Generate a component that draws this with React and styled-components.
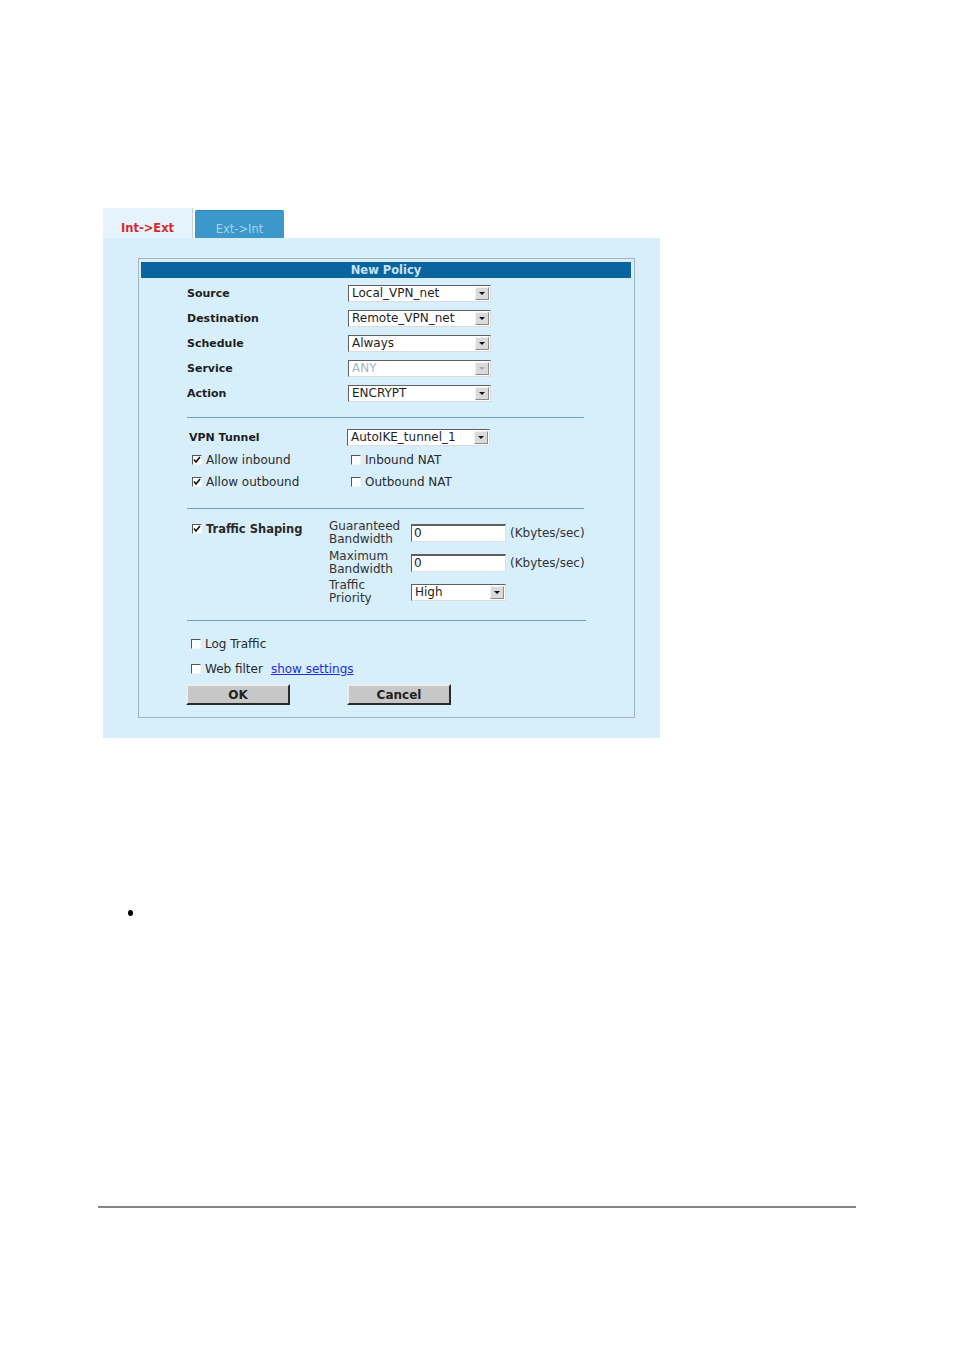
import React from 'react';
import styled, { createGlobalStyle } from 'styled-components';

const Global = createGlobalStyle`
  html, body { margin: 0; padding: 0; background: #fff; }
  body { font-family: "DejaVu Sans", Verdana, sans-serif; }
`

const Page = styled.div`
  width: 954px;
  height: 1351px;
  padding-top: 208px;
  box-sizing: border-box;
`

const Tabs = styled.div`
  margin-left: 103px;
  width: 557px;
`

const TabRow = styled.div`
  display: flex;
  align-items: flex-end;
  height: 30px;
`

const Tab = styled.div`
  box-sizing: border-box;
  display: flex;
  align-items: center;
  justify-content: center;
  font-size: 11.5px;
  ${p => p.$active ? `
    width: 90px;
    height: 30px;
    padding-top: 10px;
    background: #e4f3fc;
    color: #d42a2a;
    font-weight: bold;
    border-right: 1px solid #c3d4de;
  ` : `
    width: 89px;
    height: 28px;
    padding-top: 8px;
    margin-left: 2px;
    background: #3c97cb;
    color: #a6d3ef;
    border-top: 1px solid #2f84b6;
    border-radius: 2px 2px 0 0;
  `}
`

const Panel = styled.div`
  background: #d7eefb;
  height: 500px;
  box-sizing: border-box;
  padding: 20px 25px 20px 35px;
`

const Box = styled.div`
  border: 1px solid #a6b4bd;
  height: 460px;
  box-sizing: border-box;
  padding: 3px 3px 0 2px;
`

const Header = styled.div`
  height: 16px;
  background: #0a64a0;
  color: #c9e3f5;
  font-size: 11.5px;
  font-weight: bold;
  line-height: 16px;
  text-align: center;
`

const Body = styled.div`
  padding: 3px 0 0 46px;
  font-size: 12px;
  color: #222;
`

const Row = styled.div`
  display: flex;
  align-items: center;
  height: ${p => p.$h || 25}px;
  padding-left: ${p => p.$indent || 0}px;
`

const Label = styled.div`
  width: ${p => p.$w || 161}px;
  flex: none;
  font-size: 11px;
  font-weight: bold;
  color: #1e1e1e;
`

const Rule = styled.div`
  width: ${p => p.$w || 397}px;
  height: 1px;
  background: #6fa0bf;
  margin: ${p => p.$m || '11px 0 8px'};
`

const SelectBox = styled.div`
  display: flex;
  width: ${p => p.$w || 143}px;
  height: 17px;
  box-sizing: border-box;
  border: 1px solid;
  border-color: #5f5f5f #dcdcdc #dcdcdc #5f5f5f;
  background: #fff;
  font-size: 12px;
  color: ${p => p.$disabled ? '#aab6be' : '#1e1e1e'};
`

const SelectText = styled.div`
  flex: 1;
  padding-left: 3px;
  line-height: 15px;
  white-space: nowrap;
  overflow: hidden;
`

const Arrow = styled.div`
  width: 14px;
  flex: none;
  box-sizing: border-box;
  margin: 1px;
  background: #dadada;
  border: 1px solid;
  border-color: #f2f2f2 #8a8a8a #8a8a8a #f2f2f2;
  display: flex;
  align-items: center;
  justify-content: center;
  &::after {
    content: "";
    border-left: 3px solid transparent;
    border-right: 3px solid transparent;
    border-top: 3px solid ${p => p.$disabled ? '#a9a9a9' : '#111'};
  }
`

const Input = styled.div`
  width: 95px;
  height: 18px;
  box-sizing: border-box;
  border: 1px solid;
  border-color: #5f5f5f #e0e0e0 #e0e0e0 #5f5f5f;
  border-top-width: 2px;
  background: #fff;
  font-size: 12px;
  line-height: 15px;
  padding-left: 2px;
  flex: none;
`

const Check = styled.span`
  display: inline-flex;
  align-items: center;
  justify-content: center;
  width: 10px;
  height: 10px;
  box-sizing: border-box;
  border: 1px solid;
  border-color: #555 #f4f4f4 #f4f4f4 #555;
  background: #fff;
  margin-right: 4px;
  flex: none;
`

const Option = styled.label`
  display: flex;
  align-items: center;
  width: ${p => p.$w || 'auto'};
  font-size: ${p => p.$bold ? '11.5px' : '12px'};
  font-weight: ${p => p.$bold ? 'bold' : 'normal'};
  color: #2a2a2a;
`

const ShapingGrid = styled.div`
  display: grid;
  grid-template-columns: 137px 82px 97px auto;
  grid-auto-rows: 26px;
  row-gap: 3.5px;
  align-items: center;
  margin-left: 5px;
`

const ShapeHead = styled.div`
  grid-row: 1 / span 3;
  align-self: start;
  padding-top: 2px;
`

const SmallLabel = styled.div`
  font-size: 12px;
  line-height: 13px;
  color: #333;
`

const Unit = styled.div`
  font-size: 12px;
  color: #333;
  padding-left: 2px;
`

const Link = styled.a`
  color: #1f2ce0;
  text-decoration: underline;
  margin-left: 8px;
`

const Buttons = styled.div`
  display: flex;
  margin: 3px 0 0 -1px;
  gap: 57px;
`

const Button = styled.div`
  width: 104px;
  height: 21px;
  box-sizing: border-box;
  background: #c7c7c7;
  border: 2px solid;
  border-color: #ececec #2a2a2a #2a2a2a #ececec;
  font-size: 12px;
  font-weight: bold;
  color: #222;
  display: flex;
  align-items: center;
  justify-content: center;
`

const Bullet = styled.div`
  width: 5px;
  height: 6px;
  border-radius: 50%;
  background: #000;
  margin: 172px 0 0 128px;
`

const Footer = styled.div`
  width: 758px;
  height: 2px;
  background: #858585;
  margin: 290px 0 0 98px;
`

function Tick({ on }) {
  return (
    <Check>
      {on && (
        <svg width="8" height="8" viewBox="0 0 8 8">
          <path d="M1 3.5 L3 6 L7 1" fill="none" stroke="#111" strokeWidth="1.6" />
        </svg>
      )}
    </Check>
  )
}

function Select({ value, w, disabled }) {
  return (
    <SelectBox $w={w} $disabled={disabled}>
      <SelectText>{value}</SelectText>
      <Arrow $disabled={disabled} />
    </SelectBox>
  )
}

const fields = [
  ['Source', 'Local_VPN_net'],
  ['Destination', 'Remote_VPN_net'],
  ['Schedule', 'Always'],
  ['Service', 'ANY', true],
  ['Action', 'ENCRYPT'],
]

export default function App() {
  return (
    <Page>
      <Global />
      <Tabs>
        <TabRow>
          <Tab $active>Int-&gt;Ext</Tab>
          <Tab>Ext-&gt;Int</Tab>
        </TabRow>
        <Panel>
          <Box>
            <Header>New Policy</Header>
            <Body>
              {fields.map(([label, value, disabled]) => (
                <Row key={label}>
                  <Label>{label}</Label>
                  <Select value={value} disabled={disabled} />
                </Row>
              ))}
              <Rule />
              <Row $h={23} $indent={2}>
                <Label $w={158}>VPN Tunnel</Label>
                <Select value="AutoIKE_tunnel_1" />
              </Row>
              <Row $h={22} $indent={5}>
                <Option $w="159px"><Tick on />Allow inbound</Option>
                <Option><Tick />Inbound NAT</Option>
              </Row>
              <Row $h={22} $indent={5}>
                <Option $w="159px"><Tick on />Allow outbound</Option>
                <Option><Tick />Outbound NAT</Option>
              </Row>
              <Rule $m="15px 0 11px" />
              <ShapingGrid>
                <ShapeHead>
                  <Option $bold><Tick on />Traffic Shaping</Option>
                </ShapeHead>
                <SmallLabel>Guaranteed<br />Bandwidth</SmallLabel>
                <Input>0</Input>
                <Unit>(Kbytes/sec)</Unit>
                <SmallLabel>Maximum<br />Bandwidth</SmallLabel>
                <Input>0</Input>
                <Unit>(Kbytes/sec)</Unit>
                <SmallLabel>Traffic<br />Priority</SmallLabel>
                <Select value="High" w={95} />
              </ShapingGrid>
              <Rule $w={399} $m="15px 0 10px" />
              <Row $indent={4}>
                <Option><Tick />Log Traffic</Option>
              </Row>
              <Row $indent={4}>
                <Option><Tick />Web filter<Link href="#">show settings</Link></Option>
              </Row>
              <Buttons>
                <Button>OK</Button>
                <Button>Cancel</Button>
              </Buttons>
            </Body>
          </Box>
        </Panel>
      </Tabs>
      <Bullet />
      <Footer />
    </Page>
  )
}
